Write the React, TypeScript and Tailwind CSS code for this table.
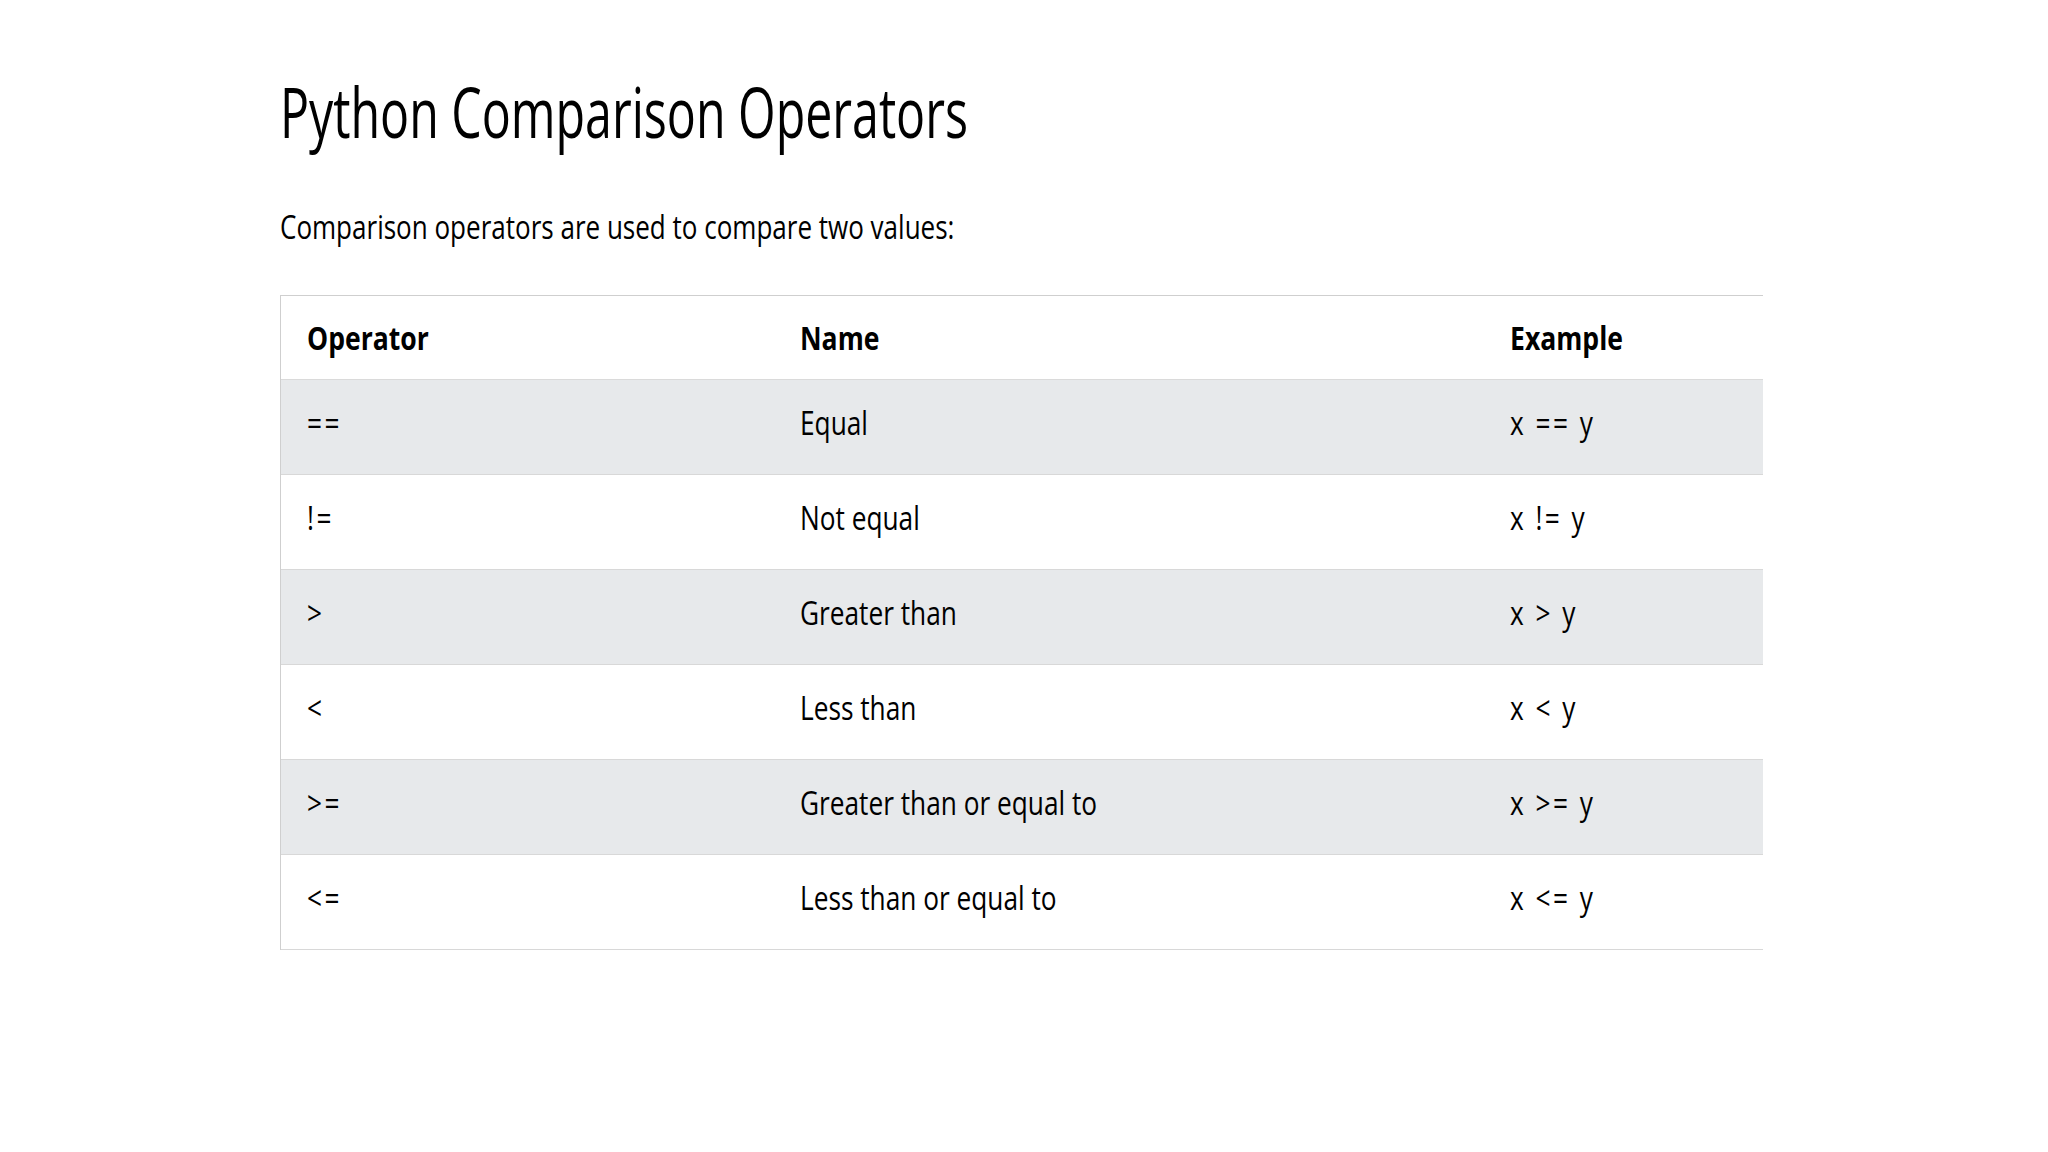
import React from "react";

const rows = [
  { op: "==", name: "Equal", ex: "x == y" },
  { op: "!=", name: "Not equal", ex: "x != y" },
  { op: ">", name: "Greater than", ex: "x > y" },
  { op: "<", name: "Less than", ex: "x < y" },
  { op: ">=", name: "Greater than or equal to", ex: "x >= y" },
  { op: "<=", name: "Less than or equal to", ex: "x <= y" },
];

function T({ children, bold, code }: { children: React.ReactNode; bold?: boolean; code?: boolean }) {
  return (
    <span
      className={
        "inline-block origin-left whitespace-nowrap text-[32px] leading-[32px] text-black " +
        (bold ? "font-bold scale-x-[0.83] " : "font-normal scale-x-[0.82] ") +
        (code ? "tracking-[3px]" : "")
      }
    >
      {children}
    </span>
  );
}

export default function App() {
  return (
    <div className="min-h-[1152px] w-[2048px] bg-white font-['Open_Sans',sans-serif]">
      <div className="ml-[280px] w-[1483px] pt-[76px]">
        <h1 className="text-[70px] font-normal leading-[70px] text-black">
          <span className="inline-block origin-left scale-x-[0.69] whitespace-nowrap">
            Python Comparison Operators
          </span>
        </h1>
        <p className="mt-[65px] text-[32px] leading-[32px] text-black">
          <span className="inline-block origin-left scale-x-[0.813] whitespace-nowrap">
            Comparison operators are used to compare two values:
          </span>
        </p>
        <div className="mt-[52px] overflow-hidden border-l border-t border-[#cfcfcf]">
          <div className="flex h-[84px] items-center border-b border-[#dadada] bg-white pt-[2px]">
            <div className="w-[494px] pl-[26px]">
              <T bold>Operator</T>
            </div>
            <div className="w-[710px] pl-[25px]">
              <T bold>Name</T>
            </div>
            <div className="flex-1 pl-[25px]">
              <T bold>Example</T>
            </div>
          </div>
          {rows.map((r, i) => (
            <div
              key={r.op}
              className={
                "flex h-[95px] items-center border-b border-[#d8d8d8] pb-[6px] " +
                (i % 2 === 0 ? "bg-[#e7e9eb]" : "bg-white")
              }
            >
              <div className="w-[494px] pl-[26px]">
                <T code>{r.op}</T>
              </div>
              <div className="w-[710px] pl-[25px]">
                <T>{r.name}</T>
              </div>
              <div className="flex-1 pl-[25px]">
                <T code>{r.ex}</T>
              </div>
            </div>
          ))}
        </div>
      </div>
    </div>
  );
}
